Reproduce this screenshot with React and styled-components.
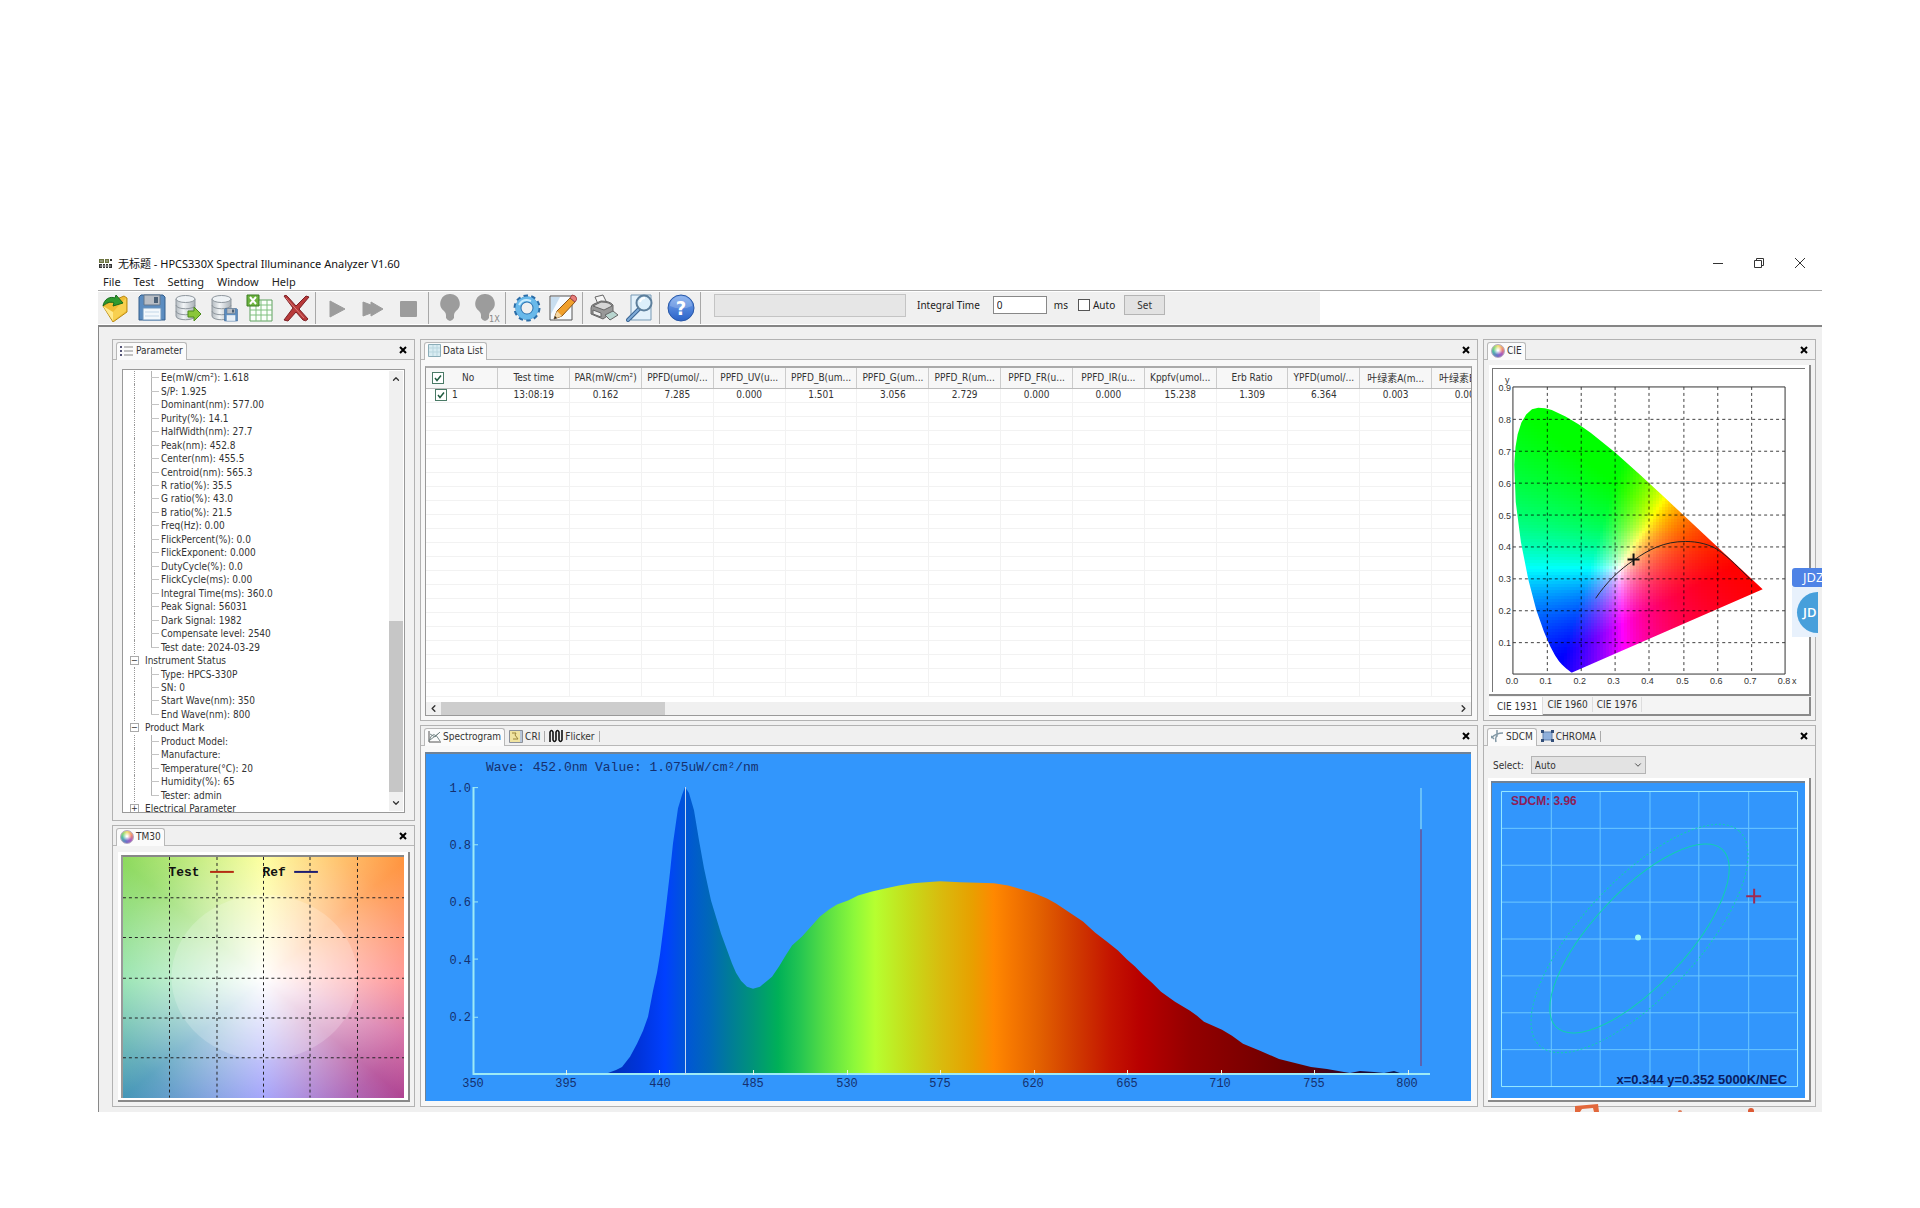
import React from "react";
import styled, { createGlobalStyle, css } from "styled-components";
import { ChevronDown, ChevronUp, ChevronLeft, ChevronRight } from "lucide-react";

const uiFont = `"DejaVu Sans Condensed", "Noto Sans CJK SC", sans-serif`;
const titleFont = `"Noto Sans", "Noto Sans CJK SC", sans-serif`;

const GlobalStyle = createGlobalStyle`
  * {
    box-sizing: border-box;
  }

  body {
    margin: 0;
    background: #fff;
    color: #333;
    font-family: ${uiFont};
    font-size: 10px;
  }

  button,
  input,
  select {
    font: inherit;
    color: inherit;
  }
`;

const Page = styled.div`
  display: flex;
  min-height: 100vh;
  padding: 253px 98px 96px;
`;

const Window = styled.div`
  position: relative;
  display: flex;
  flex: 1;
  flex-direction: column;
  min-width: 0;
  overflow: hidden;
`;

const TitleBar = styled.header`
  display: flex;
  align-items: center;
  height: 20px;
  gap: 6px;
  padding: 0 16px 0 1px;
  font-family: ${titleFont};
  font-size: 11px;
  color: #111;
`;

const Title = styled.h1`
  flex: 1;
  margin: 0;
  font-size: 11px;
  font-weight: 400;
`;

const WindowButtons = styled.div`
  display: flex;
  gap: 29px;
`;

const PlainButton = styled.button`
  display: flex;
  align-items: center;
  justify-content: center;
  padding: 0;
  border: 0;
  background: none;
`;

const MenuBar = styled.nav`
  display: flex;
  align-items: center;
  height: 16px;
  gap: 13px;
  margin-bottom: 1px;
  padding-left: 5px;
  font-family: ${titleFont};
  font-size: 11px;
  color: #222;
`;

const MenuItem = styled(PlainButton)``;

const ToolStrip = styled.div`
  display: flex;
  height: 37px;
  padding: 1px 0;
  border-top: 1px solid #aaa;
  border-bottom: 2px solid #858585;
`;

const Tools = styled.div`
  display: flex;
  align-items: center;
  width: 1222px;
  background: #f0f0f0;
`;

const ToolButton = styled(PlainButton)`
  width: 36px;
  height: 32px;
`;

const Divider = styled.span`
  width: 1px;
  height: 32px;
  margin: 0 3px 0 1px;
  background: #a8a8a8;
`;

const Progress = styled.div`
  width: 192px;
  height: 23px;
  margin: 0 11px 6px 10px;
  border: 1px solid #c4c4c4;
  background: #e6e6e6;
`;

const Field = styled.label`
  display: flex;
  align-items: center;
  margin-bottom: 6px;
  font-family: ${titleFont};
  font-size: 10px;
  color: #222;
`;

const TimeInput = styled.input`
  width: 54px;
  height: 18px;
  margin: 0 7px 0 13px;
  padding: 0 3px;
  border: 1px solid #888;
  background: #fff;
`;

const checkMark = `url("data:image/svg+xml,%3Csvg xmlns='http://www.w3.org/2000/svg' viewBox='0 0 10 10'%3E%3Cpath d='M2 5l2 2.500L8 2.500' fill='none' stroke='%23205c40' stroke-width='1.500'/%3E%3C/svg%3E")`;

const Tick = styled.input`
  appearance: none;
  width: 12px;
  height: 12px;
  margin: 0 3px 0 0;
  border: 1px solid #555;
  background: #fff;

  &:checked {
    border-color: #4a7a66;
    background-image: ${checkMark};
  }
`;

const AutoField = styled(Field)`
  margin-left: 10px;
`;

const SetButton = styled.button`
  width: 41px;
  height: 20px;
  margin: 0 0 6px 9px;
  padding: 0;
  border: 1px solid #b4b4b4;
  background: #e2e2e2;
  font-family: ${titleFont};
`;

const Workspace = styled.main`
  display: grid;
  grid-template-columns: 303fr 1058fr 333fr;
  flex: 1;
  column-gap: 5px;
  padding: 12px 6px 5px 13px;
  border-left: 1px solid #888;
  background: #f0f0f0;
`;

const Column = styled.div`
  display: flex;
  flex-direction: column;
  gap: 4px;
  min-width: 0;
`;

const PanelFrame = styled.section`
  display: flex;
  flex: ${({ $grow }) => $grow} 1 0;
  flex-direction: column;
  min-height: 0;
  border: 1px solid #b2b2b2;
  background: ${({ $light }) => ($light ? "#f8f8f8" : "#f2f2f2")};
`;

const PanelHeader = styled.div`
  display: flex;
  align-items: flex-end;
  height: 20px;
  padding: 0 7px 0 3px;
  border-bottom: 1px solid #b8b8b8;
  background: #f0f0f0;
`;

const Tab = styled(PlainButton)`
  height: 17px;
  gap: 2px;
  padding: 0 0 1px 4px;
  ${({ $active }) =>
    $active
      ? css`
          height: 18px;
          margin-bottom: -1px;
          padding: 0 3px 2px 3px;
          border: 1px solid #b8b8b8;
          border-bottom: 0;
          border-radius: 3px 3px 0 0;
          background: #fbfbfb;
        `
      : css`
          &::after {
            content: "";
            width: 1px;
            height: 11px;
            margin-left: 2px;
            background: #aaa;
          }
        `}
`;

const CloseButton = styled(PlainButton)`
  margin: 0 0 5px auto;
`;

const PanelBody = styled.div`
  display: flex;
  flex: 1;
  flex-direction: column;
  min-height: 0;
  padding: ${({ $pad }) => $pad};
`;

const TreeBox = styled.div`
  display: flex;
  flex: 1;
  min-height: 0;
  border: 1px solid #999;
  background: #fff;
  overflow: hidden;
`;

const Tree = styled.ul`
  display: grid;
  grid-auto-rows: 1fr;
  flex: 1;
  margin: 1px 0 -3px;
  padding: 0 0 0 11px;
  list-style: none;
`;

const TreeRow = styled.li`
  display: flex;
  align-items: center;
  min-height: 0;
  line-height: 13px;
  white-space: nowrap;
`;

const Trunk = styled.span`
  align-self: stretch;
  width: 17px;
  border-left: 1px dotted #999;
`;

const Branch = styled.span`
  align-self: stretch;
  width: 8px;
  margin-right: 2px;
  background: linear-gradient(#c4c4c4, #c4c4c4) 0 50% / 8px 1px no-repeat,
    linear-gradient(#b4b4b4, #b4b4b4) 0 0 / 1px ${({ $last }) => ($last ? "50%" : "100%")} no-repeat;
`;

const Expander = styled(PlainButton)`
  width: 9px;
  height: 9px;
  margin: 0 6px 0 -4px;
  border: 1px solid #aaa;
  background: #fff;
  font-size: 9px;
  line-height: 7px;
`;

const VerticalScroll = styled.div`
  display: flex;
  flex-direction: column;
  align-items: center;
  width: 14px;
  margin: 1px 1px 1px 0;
  padding: 3px 0;
  background: #f0f0f0;
`;

const VerticalTrack = styled.div`
  display: flex;
  flex: 1;
  align-items: flex-end;
  width: 100%;
  padding-bottom: 6px;
`;

const VerticalThumb = styled.div`
  width: 100%;
  height: 42%;
  background: #c6c6c6;
`;

const HorizontalScroll = styled.div`
  display: flex;
  align-items: center;
  height: 13px;
  padding: 0 2px;
  background: #f0f0f0;
`;

const HorizontalTrack = styled.div`
  flex: 1;
  height: 100%;
  padding-left: 2px;
`;

const HorizontalThumb = styled.div`
  width: 22%;
  height: 100%;
  background: #cdcdcd;
`;

const SheetBox = styled.div`
  display: flex;
  flex: 1;
  flex-direction: column;
  min-height: 0;
  border: 1px solid #999;
  border-top: 2px solid #aaa;
  background: #fff;
  overflow: hidden;
`;

const SheetScroll = styled.div`
  flex: 1;
  min-height: 0;
  overflow: hidden;
`;

const Sheet = styled.table`
  width: 1078px;
  table-layout: fixed;
  border-collapse: collapse;
`;

const HeadCell = styled.th`
  height: 20px;
  padding: 0;
  border-right: 1px solid #ccc;
  border-bottom: 1px solid #bbb;
  background: #f7f7f7;
  font-weight: 400;
  white-space: nowrap;
  overflow: hidden;
`;

const Cell = styled.td`
  height: 14px;
  padding: 0;
  border-right: 1px solid #f2f2f2;
  border-bottom: 1px solid #f2f2f2;
  line-height: 12px;
  text-align: center;
`;

const CheckCell = styled.div`
  display: flex;
  align-items: center;
  gap: ${({ $gap }) => $gap}px;
  padding-left: ${({ $left }) => $left}px;
`;

const Sunken = styled.div`
  display: flex;
  flex: 1;
  min-height: 0;
  padding: 3px 4px 2px 3px;
  border-right: 2px solid #8a8a8a;
  border-bottom: 2px solid #8a8a8a;
  background: #fff;
`;

const TmPlot = styled.div`
  display: flex;
  flex: 1;
  border-top: 2px solid #888;
  border-left: 2px solid #999;
  background: radial-gradient(
      ellipse 68% 72% at 50% 51%,
      #fff,
      rgba(255, 255, 255, 0.5) 45%,
      rgba(255, 255, 255, 0.16) 80%,
      rgba(255, 255, 255, 0.04)
    ),
    conic-gradient(
      at 50% 51%,
      #fdff80,
      #ffc45c 27deg,
      #ff9038 50deg,
      #ff7c7c 90deg,
      #d05c98 112deg,
      #ac3c8e 130deg,
      #8484fa 180deg,
      #3e92b4 230deg,
      #80dea0 270deg,
      #88d858 310deg,
      #fdff80
    );
`;

const Plot = styled.svg`
  display: block;
  flex: 1;
  width: 100%;
  height: 100%;
  min-width: 0;
  min-height: 0;
`;

const BlueBox = styled.div`
  display: flex;
  flex: 1;
  min-height: 0;
  border-top: 2px solid #6f8296;
  border-left: 1px solid #6f8296;
  background: #3296fc;
`;

const CieBox = styled.div`
  display: flex;
  flex: 1;
  min-height: 0;
  border-top: 1px solid #777;
  border-left: 1px solid #777;
`;

const CieTabs = styled.div`
  display: flex;
  height: 19px;
  margin-top: 1px;
  border-right: 2px solid #8a8a8a;
  border-bottom: 2px solid #8a8a8a;
  background: #f4f4f4;
`;

const CieTab = styled(PlainButton)`
  height: ${({ $active }) => ($active ? 18 : 15)}px;
  padding: ${({ $active }) => ($active ? "0 5px 0 8px" : "0 4px")};
  border-right: 1px solid #ddd;
  background: ${({ $active }) => ($active ? "#fff" : "transparent")};
`;

const SelectRow = styled.div`
  display: flex;
  align-items: center;
  gap: 7px;
  height: 32px;
  padding: 6px 0 0 5px;
`;

const SelectWrap = styled.span`
  display: grid;
  align-items: center;

  > * {
    grid-area: 1 / 1;
  }

  > svg {
    justify-self: end;
    margin-right: 3px;
    pointer-events: none;
  }
`;

const Select = styled.select`
  appearance: none;
  width: 115px;
  height: 18px;
  padding: 0 3px;
  border: 1px solid #b4b4b4;
  border-radius: 0;
  background: #e3e3e3;
`;

// floating helper docked to the right edge of the desktop
const Dock = styled.aside`
  position: absolute;
  top: 315px;
  right: 0;
  width: 30px;
  overflow: hidden;
  font-family: "Open Sans", sans-serif;
  color: #fff;
`;

const DockLabel = styled.div`
  height: 19px;
  padding-left: 11px;
  border-radius: 3px 0 0 3px;
  background: #4f83e6;
  font-size: 13px;
  line-height: 19px;
`;

const DockBody = styled.div`
  height: 50px;
  margin-right: 4px;
  padding: 5px 0 0 5px;
  background: #e8f1fc;
  overflow: hidden;
`;

const DockCircle = styled.div`
  width: 41px;
  height: 41px;
  padding-left: 6px;
  border-radius: 50%;
  background: #479fdb;
  font-size: 13px;
  font-weight: 600;
  line-height: 41px;
`;

const Splash = styled.svg`
  position: absolute;
  right: 66px;
  bottom: 0;
`;

const disk = (
  <g>
    <path d="M1 3 3 1h22l2 2v23H1z" fill="#5b8cc0" stroke="#345f8c" />
    <path d="M6 1h16v10H6z" fill="#b9bec5" stroke="#66788c" />
    <path d="M16 3h4v6h-4z" fill="#4b6076" />
    <path d="M5 14h18v12H5z" fill="#f3f8fc" stroke="#6d95bd" />
    <path d="M7 18h14M7 22h14" stroke="#c3d7e8" />
  </g>
);

const database = (
  <g stroke="#8f979e" strokeWidth="1">
    <path d="M2 5v17c0 5 19 5 19 0V5z" fill="url(#metal)" />
    <path d="M2 11c0 5 19 5 19 0M2 17c0 5 19 5 19 0" fill="none" />
    <ellipse cx="11.500" cy="5" rx="9.500" ry="3.500" fill="#eef2f5" />
  </g>
);

const bulb = <path d="M10 0a9.500 9.500 0 0 0-6 17q2 2 2 4v3q4 6 8 0v-3q0-2 2-4A9.500 9.500 0 0 0 10 0z" fill="#9c9c9c" />;

const icons = {
  open: (
    <g>
      <path d="M1 12 8 8 22 2l3 2v14L11 28z" fill="#f0bd35" stroke="#b98b16" />
      <path d="M1 12l10 6v9z" fill="#ffe98c" />
      <path d="M11 18v9l13-10V4z" fill="#f8d050" />
      <path d="M1 12C2 5 8 2 13 4l1-3 7 8-10 3 1-3c-4-2-8 0-11 3z" fill="#2f9a2f" stroke="#176b1b" />
    </g>
  ),
  save: disk,
  exportDb: (
    <g>
      {database}
      <path d="M14 17h6v-4l7 7-7 7v-4h-6z" fill="#8ac63a" stroke="#4b8a1c" />
    </g>
  ),
  saveDb: (
    <g>
      {database}
      <g transform="translate(14 14) scale(.5)">{disk}</g>
    </g>
  ),
  excel: (
    <g>
      <path d="M4 6h22v21H4z" fill="#fbfffb" stroke="#5ea05e" />
      <path d="M4 11h22M4 16h22M4 21h22M10 6v21M15 6v21M21 6v21" stroke="#7fc07f" />
      <path d="M1 1h12v11H1z" fill="#6cb33f" stroke="#3d7f24" />
      <path d="m4 3 6 7m0-7-6 7" stroke="#fff" strokeWidth="2" />
    </g>
  ),
  remove: (
    <g>
      <path d="M2 2q2-2 4 1l8 9L24 2l3 1-10 12 9 10q-2 3-5 1l-7-8-8 9-4-1 9-12z" fill="#b83a3a" stroke="#7b1f24" />
      <path d="m4 4 18 20" stroke="#dc7b78" />
    </g>
  ),
  play: <path d="M7 7l15 8-15 8z" fill="#9c9c9c" stroke="#9c9c9c" strokeLinejoin="round" />,
  forward: <path d="M4 8l8 3V8l12 7-12 7v-3l-8 3z" fill="#9c9c9c" stroke="#9c9c9c" strokeLinejoin="round" />,
  stop: <rect x="5" y="7" width="17" height="16" rx="1" fill="#9c9c9c" />,
  bulb: <g transform="translate(4 0)">{bulb}</g>,
  bulbX: (
    <g>
      <g transform="translate(3 0)">{bulb}</g>
      <text x="17" y="28" fontSize="9" fill="#888">
        1X
      </text>
    </g>
  ),
  gear: (
    <g>
      <circle cx="14" cy="14" r="11.500" fill="none" stroke="#2b6da8" strokeWidth="4" strokeDasharray="4.200 3.025" />
      <circle cx="14" cy="14" r="8.500" fill="none" stroke="#2d73b0" strokeWidth="6" />
      <circle cx="14" cy="14" r="9" fill="none" stroke="#69b9ea" strokeWidth="5" />
      <path d="M6 11q4-7 12-4" fill="none" stroke="#c8ecff" strokeWidth="2" />
    </g>
  ),
  edit: (
    <g>
      <path d="M1 2h22v24H1z" fill="#f7fbff" stroke="#555" />
      <path d="M2 3h9L2 20z" fill="#c8def0" />
      <path d="M5 25l3-8L21 4l5 4-13 14z" fill="#f0a02c" stroke="#8c5516" />
      <path d="M21 4l2-3q4 0 5 4l-2 3z" fill="#e77d79" stroke="#a04545" />
      <path d="M5 25l3-8 5 5z" fill="#f4d7a5" />
      <path d="M5 25l1-3 2 2z" fill="#222" />
    </g>
  ),
  print: (
    <g stroke="#666">
      <path d="M8 10 5 3l8-2 4 8z" fill="#f7f7f7" />
      <path d="M1 14q0-3 3-4l7-3q9 0 12 4v7l-10 7-12-5z" fill="#989898" />
      <path d="M3 12l8-4q9 0 11 4l-8 4z" fill="#d6d6d6" />
      <path d="M3 16l8 3v4l-8-3z" fill="#eee" />
      <path d="M15 21l8-4 5 4-8 5z" fill="#b8d5cf" />
    </g>
  ),
  preview: (
    <g>
      <path d="M5 1h20v25H5z" fill="#e3f1fb" stroke="#7699b5" />
      <path d="M13 15 2 26" stroke="#3b6594" strokeWidth="4" strokeLinecap="round" />
      <path d="M13 15 2 26" stroke="#7facd8" strokeWidth="2" strokeLinecap="round" />
      <circle cx="18" cy="9" r="7.500" fill="#dceffb" stroke="#5d7f9c" strokeWidth="2" />
      <path d="M14 8q1-4 5-4" stroke="#fff" strokeWidth="2" fill="none" />
    </g>
  ),
  help: (
    <g>
      <circle cx="14" cy="14" r="13" fill="url(#helpBlue)" stroke="#2857a6" />
      <path d="M3 12a11 10 0 0 1 22 0q-11 5-22 0z" fill="#fff" opacity=".2" />
      <text x="14" y="21" fontSize="20" fontWeight="700" textAnchor="middle" fill="#fff">
        ?
      </text>
    </g>
  ),
};

const ToolIcon = ({ name }) => (
  <svg width="28" height="28" viewBox="0 0 28 28" aria-hidden="true">
    {icons[name]}
  </svg>
);

const tools = [
  ["open", "save", "exportDb", "saveDb", "excel", "remove"],
  ["play", "forward", "stop"],
  ["bulb", "bulbX"],
  ["gear", "edit"],
  ["print", "preview"],
  ["help"],
];

const Wheel = styled.span`
  width: 14px;
  height: 14px;
  border: 1px solid #b5a8c0;
  border-radius: 50%;
  background: radial-gradient(circle at 50% 45%, #fff 5%, transparent 50%),
    conic-gradient(#f0df70, #f08a70 70deg, #a85cc0 130deg, #6a70c8 190deg, #4fb8a8 260deg, #8bd878 310deg, #f0df70);
`;

const tabIcons = {
  wheel: <Wheel />,
  list: (
    <svg width="14" height="12" viewBox="0 0 14 12">
      <path d="M0 2h2M0 6h2M0 10h2" stroke="#557" strokeWidth="2" />
      <path d="M4 2h9M4 6h9M4 10h9" stroke="#888" />
    </svg>
  ),
  sheet: (
    <svg width="13" height="13" viewBox="0 0 13 13">
      <path d="M.5.5h12v12H.5z" fill="#d8ecf2" stroke="#8badb8" />
      <path d="M1 4h11M1 8h11M5 1v11M9 1v11" stroke="#b9d6df" />
    </svg>
  ),
  spectrum: (
    <svg width="13" height="12" viewBox="0 0 13 12" fill="none">
      <path d="M1 0v11h12" stroke="#555" />
      <path d="M1 10Q5-3 12 10M2 3l5 3 5-5M2 9l9-7" stroke="#788" />
    </svg>
  ),
  cri: (
    <svg width="14" height="13" viewBox="0 0 14 13">
      <path d="M.5.5h13v12H.5z" fill="#f0e3a0" stroke="#8a8f98" />
      <path d="M3 3h4l-1 2 3 4H4" stroke="#9a8438" fill="none" />
      <path d="M11 1h2v11h-2z" fill="#b9c6d8" />
    </svg>
  ),
  flicker: (
    <svg width="14" height="14" viewBox="0 0 14 14">
      <path d="M1 13V3q1.500-3 3 0v8q1.500 3 3 0V3q1.500-3 3 0v8q1.500 3 3 0V1" stroke="#111" strokeWidth="1.600" fill="none" />
    </svg>
  ),
  sdcm: (
    <svg width="13" height="13" viewBox="0 0 13 13" fill="none" stroke="#8298a5">
      <path d="M0 8q5-5 12-5M6 0v6q-2 1-1 6M0 6l3 3" strokeWidth="1.500" />
    </svg>
  ),
  chroma: (
    <svg width="13" height="12" viewBox="0 0 13 12">
      <path d="M2 2h9v8H2z" fill="#8fb0dc" stroke="#6483ae" />
      <path d="M0 0h3v3H0zM10 0h3v3h-3zM0 9h3v3H0zM10 9h3v3h-3z" fill="#34507a" />
    </svg>
  ),
};

const Panel = ({ tabs, grow, light, pad, children }) => (
  <PanelFrame $grow={grow} $light={light}>
    <PanelHeader>
      {tabs.map(([icon, label], i) => (
        <Tab key={label} $active={i === 0}>
          {tabIcons[icon]}
          {label}
        </Tab>
      ))}
      <CloseButton aria-label="Close panel">
        <svg width="8" height="8" viewBox="0 0 8 8">
          <path d="m1 1 6 6m0-6-6 6" stroke="#000" strokeWidth="2" />
        </svg>
      </CloseButton>
    </PanelHeader>
    <PanelBody $pad={pad}>{children}</PanelBody>
  </PanelFrame>
);

const treeGroups = [
  {
    items: [
      "Ee(mW/cm²): 1.618",
      "S/P: 1.925",
      "Dominant(nm): 577.00",
      "Purity(%): 14.1",
      "HalfWidth(nm): 27.7",
      "Peak(nm): 452.8",
      "Center(nm): 455.5",
      "Centroid(nm): 565.3",
      "R ratio(%): 35.5",
      "G ratio(%): 43.0",
      "B ratio(%): 21.5",
      "Freq(Hz): 0.00",
      "FlickPercent(%): 0.0",
      "FlickExponent: 0.000",
      "DutyCycle(%): 0.0",
      "FlickCycle(ms): 0.00",
      "Integral Time(ms): 360.0",
      "Peak Signal: 56031",
      "Dark Signal: 1982",
      "Compensate level: 2540",
      "Test date: 2024-03-29",
    ],
  },
  {
    title: "Instrument Status",
    items: ["Type: HPCS-330P", "SN: 0", "Start Wave(nm): 350", "End Wave(nm): 800"],
  },
  {
    title: "Product Mark",
    items: ["Product Model:", "Manufacture:", "Temperature(°C): 20", "Humidity(%): 65", "Tester: admin"],
  },
  { title: "Electrical Parameter", closed: true, items: [] },
];

const ParameterTree = () => (
  <TreeBox>
    <Tree>
      {treeGroups.map((group, g) => (
        <React.Fragment key={g}>
          {group.title && (
            <TreeRow>
              <Expander aria-label={group.title}>{group.closed ? "+" : "−"}</Expander>
              {group.title}
            </TreeRow>
          )}
          {group.items.map((item, i) => (
            <TreeRow key={item}>
              <Trunk />
              <Branch $last={i === group.items.length - 1} />
              {item}
            </TreeRow>
          ))}
        </React.Fragment>
      ))}
    </Tree>
    <VerticalScroll>
      <ChevronUp size={10} strokeWidth={3} />
      <VerticalTrack>
        <VerticalThumb />
      </VerticalTrack>
      <ChevronDown size={10} strokeWidth={3} />
    </VerticalScroll>
  </TreeBox>
);

const columns = [
  ["Test time", "13:08:19"],
  ["PAR(mW/cm²)", "0.162"],
  ["PPFD(umol/...", "7.285"],
  ["PPFD_UV(u...", "0.000"],
  ["PPFD_B(um...", "1.501"],
  ["PPFD_G(um...", "3.056"],
  ["PPFD_R(um...", "2.729"],
  ["PPFD_FR(u...", "0.000"],
  ["PPFD_IR(u...", "0.000"],
  ["Kppfv(umol...", "15.238"],
  ["Erb Ratio", "1.309"],
  ["YPFD(umol/...", "6.364"],
  ["叶绿素A(m...", "0.003"],
  ["叶绿素B(m...", "0.001"],
];

const emptyRows = Array.from({ length: 21 }, (_, i) => i);

const DataSheet = () => (
  <SheetBox>
    <SheetScroll>
      <Sheet>
        <thead>
          <tr>
            <HeadCell scope="col">
              <CheckCell $left={6} $gap={15}>
                <Tick type="checkbox" aria-label="Select all" defaultChecked />
                No
              </CheckCell>
            </HeadCell>
            {columns.map(([label]) => (
              <HeadCell key={label} scope="col">
                {label}
              </HeadCell>
            ))}
          </tr>
        </thead>
        <tbody>
          <tr>
            <Cell>
              <CheckCell $left={9} $gap={2}>
                <Tick type="checkbox" aria-label="Select row 1" defaultChecked />1
              </CheckCell>
            </Cell>
            {columns.map(([label, value]) => (
              <Cell key={label}>{value}</Cell>
            ))}
          </tr>
          {emptyRows.map((row) => (
            <tr key={row}>
              <Cell />
              {columns.map(([label]) => (
                <Cell key={label} />
              ))}
            </tr>
          ))}
        </tbody>
      </Sheet>
    </SheetScroll>
    <HorizontalScroll>
      <ChevronLeft size={11} strokeWidth={3} />
      <HorizontalTrack>
        <HorizontalThumb />
      </HorizontalTrack>
      <ChevronRight size={11} strokeWidth={3} />
    </HorizontalScroll>
  </SheetBox>
);

const Tm30 = () => (
  <TmPlot>
    <Plot viewBox="0 0 284 242" preserveAspectRatio="none">
      <ellipse cx="143" cy="121" rx="94" ry="83" fill="#fff" opacity=".2" />
      <g stroke="#222" strokeDasharray="3 3">
        {[47, 95, 142, 189, 237].map((x) => (
          <path key={x} d={`M${x} 0v242`} />
        ))}
        {[41, 81, 122, 162, 202].map((y) => (
          <path key={y} d={`M0 ${y}h284`} />
        ))}
      </g>
      <g fontFamily="Liberation Mono, monospace" fontSize="13" fontWeight="700" fill="#111">
        <text x="46" y="19">
          Test
        </text>
        <text x="141" y="19">
          Ref
        </text>
      </g>
      <path d="M88 15h24" stroke="#b42c12" strokeWidth="2" />
      <path d="M173 15h24" stroke="#1c1c70" strokeWidth="2" />
    </Plot>
  </TmPlot>
);

const spectrumStops = [
  [611, "#0030b8"],
  [640, "#0034dc"],
  [665, "#0040ff"],
  [686, "#0056d6"],
  [710, "#0068b8"],
  [730, "#007c98"],
  [754, "#009478"],
  [778, "#00b058"],
  [799, "#22c452"],
  [823, "#52dc46"],
  [854, "#8cf83a"],
  [875, "#b6ff30"],
  [909, "#c6dc1a"],
  [940, "#d8bc0e"],
  [972, "#e8a000"],
  [994, "#ff8800"],
  [1011, "#f67800"],
  [1040, "#e26000"],
  [1076, "#d03a00"],
  [1111, "#c41400"],
  [1140, "#b80000"],
  [1190, "#940000"],
  [1297, "#680000"],
  [1368, "#180838"],
  [1408, "#082060"],
];

const spectrumCurve =
  "608,1072 616,1069 622,1066 630,1056 637,1043 643,1030 648,1016 653,990 657,972 660,954 665,915 670,872 673,843 678,808 682,795 685,787 689,793 694,810 699,840 704,868 711,900 721,933 732,963 736,972 741,980 747,986 753,988 760,986 766,981 772,976 779,966 785,956 792,945 802,936 811,926 820,916 829,909 837,904 848,900 858,895 872,891 885,888 899,885 913,883 926,882 940,881 960,882 994,883 1008,885 1022,889 1035,893 1047,898 1056,903 1065,909 1074,915 1083,921 1095,932 1108,942 1118,950 1127,959 1135,966 1143,974 1152,982 1161,991 1175,1001 1190,1010 1197,1015 1204,1021 1213,1025 1222,1029 1232,1035 1243,1043 1260,1050 1279,1058 1295,1062 1311,1066 1327,1068 1344,1071 1350,1072 1360,1070 1374,1071 1384,1072 1394,1070 1400,1072";

const Spectrogram = () => (
  <BlueBox>
    <Plot viewBox="426 754 1045 346" preserveAspectRatio="none">
      <defs>
        <linearGradient id="spectrum" gradientUnits="userSpaceOnUse" x1="611" y1="0" x2="1408" y2="0">
          {spectrumStops.map(([x, color]) => (
            <stop key={x} offset={(x - 611) / 797} stopColor={color} />
          ))}
        </linearGradient>
      </defs>
      <polygon points={spectrumCurve} fill="url(#spectrum)" />
      <g stroke="#9eeaf5" fill="none">
        <path d="M473.500 787V1073H1430" strokeWidth="2" />
        {[787, 844, 901, 958, 1016].map((y) => (
          <path key={y} d={`M473 ${y + 0.5}h5`} />
        ))}
        {[566, 659, 753, 847, 940, 1034, 1127, 1221, 1314, 1408].map((x) => (
          <path key={x} d={`M${x + 0.5} 1069v5`} stroke="#e8f4e0" />
        ))}
        <path d="M685.500 787v287" stroke="#c5d8f0" />
        <path d="M1421 788v41" />
        <path d="M1421 829v236" stroke="#843064" />
      </g>
      <g fontFamily="Liberation Mono, monospace" fontSize="12" fill="#15306e">
        <text x="486" y="771" fontSize="13">
          Wave: 452.0nm Value: 1.075uW/cm²/nm
        </text>
        {["1.0", "0.8", "0.6", "0.4", "0.2"].map((label, i) => (
          <text key={label} x="471" y={792 + i * 57} textAnchor="end">
            {label}
          </text>
        ))}
        {[350, 395, 440, 485, 530, 575, 620, 665, 710, 755, 800].map((nm, i) => (
          <text key={nm} x={473 + Math.round(i * 93.4)} y="1086" textAnchor="middle">
            {nm}
          </text>
        ))}
      </g>
    </Plot>
  </BlueBox>
);

const locus = [
  [0.1741, 0.005], [0.1714, 0.0051], [0.1644, 0.0109], [0.1566, 0.0177], [0.144, 0.0297],
  [0.1355, 0.0399], [0.1241, 0.0578], [0.1096, 0.0868], [0.0913, 0.1327], [0.0687, 0.2007],
  [0.0454, 0.295], [0.0235, 0.4127], [0.0082, 0.5384], [0.0039, 0.6548], [0.0075, 0.71],
  [0.0139, 0.7502], [0.025, 0.787], [0.0389, 0.812], [0.056, 0.829], [0.0743, 0.8338],
  [0.094, 0.832], [0.1142, 0.8262], [0.1547, 0.8059], [0.1929, 0.7816], [0.2296, 0.7543],
  [0.3016, 0.6923], [0.3731, 0.6245], [0.4441, 0.5547], [0.5125, 0.4866], [0.5752, 0.4242],
  [0.627, 0.3725], [0.6915, 0.3083], [0.7347, 0.2653],
];

const cieX = (x) => 20 + x * 341;
const cieY = (y) => 306 - y * 320.5;

// linear sRGB of a chromaticity, scaled so the strongest channel is full
const xyColor = (x, y) => {
  const X = x / y;
  const Z = (1 - x - y) / y;
  const rgb = [
    3.2406 * X - 1.5372 - 0.4986 * Z,
    -0.9689 * X + 1.8758 + 0.0415 * Z,
    0.0557 * X - 0.204 + 1.057 * Z,
  ].map((v) => Math.max(0, v));
  const top = Math.max(...rgb);
  return `rgb(${rgb.map((v) => Math.round((v / top) * 255)).join(",")})`;
};

const cieCells = [];
for (let px = 0; px < 252; px += 3) {
  for (let py = 0; py < 270; py += 3) {
    const x = (px + 1.5) / 341;
    const y = (py + 1.5) / 320.5;
    if (x + y < 1.03 && y > x * 0.46 - 0.1) {
      cieCells.push({ px: px + 20, py: 303 - py, fill: xyColor(x, y) });
    }
  }
}

const Cie = () => (
  <CieBox>
    <Plot viewBox="0 0 313 324" preserveAspectRatio="none">
      <defs>
        <clipPath id="locus">
          <polygon points={locus.map(([x, y]) => `${cieX(x)},${cieY(y)}`).join(" ")} />
        </clipPath>
      </defs>
      <g clipPath="url(#locus)" shapeRendering="crispEdges">
        {cieCells.map(({ px, py, fill }) => (
          <rect key={`${px}-${py}`} x={px} y={py} width="3" height="3" fill={fill} />
        ))}
      </g>
      <g stroke="#000" strokeDasharray="3 3" opacity=".75">
        {[1, 2, 3, 4, 5, 6, 7].map((i) => (
          <path key={i} d={`M${Math.round(cieX(i / 10)) + 0.5} 18v288`} />
        ))}
        {[1, 2, 3, 4, 5, 6, 7, 8].map((i) => (
          <path key={i} d={`M20 ${Math.round(cieY(i / 10)) + 0.5}h273`} />
        ))}
      </g>
      <path d="M20 18h273v288H20z" fill="none" stroke="#333" />
      <path
        d="M103 230C113 215 127 201 141 192C156 181 172 173 193 173C206 173 217 176 225 181C237 189 248 201 259 212"
        fill="none"
        stroke="#222"
      />
      <path d="M141 185v12M135 191h12" stroke="#111" strokeWidth="2" />
      <g fontFamily="Liberation Sans, sans-serif" fontSize="9" fill="#333">
        <text x="12" y="14">
          y
        </text>
        {[1, 2, 3, 4, 5, 6, 7, 8, 9].map((i) => (
          <text key={i} x="18" y={Math.round(cieY(i / 10)) + 4} textAnchor="end">
            {(i / 10).toFixed(1)}
          </text>
        ))}
        {[0, 1, 2, 3, 4, 5, 6, 7, 8].map((i) => (
          <text key={i} x={Math.round(cieX(i / 10)) - 1} y="316" textAnchor="middle">
            {(i / 10).toFixed(1)}
          </text>
        ))}
        <text x="300" y="316">
          x
        </text>
      </g>
    </Plot>
  </CieBox>
);

const Sdcm = () => (
  <BlueBox>
    <Plot viewBox="0 0 314 316" preserveAspectRatio="none">
      <g stroke="#6cc8ff">
        {[59, 108, 158, 207, 257].map((x) => (
          <path key={x} d={`M${x + 0.5} 9v296`} />
        ))}
        {[46, 83, 120, 157, 194, 231, 268].map((y) => (
          <path key={y} d={`M10 ${y - 0.5}h296`} />
        ))}
      </g>
      <path d="M9.500 8.500h297v296h-297z" fill="none" stroke="#98eaff" />
      <g fill="none" stroke="#10d0b0" transform="translate(148 156) rotate(-47)">
        <ellipse rx="122" ry="47" />
        <ellipse rx="147" ry="58" strokeDasharray="2 2" />
      </g>
      <circle cx="146.500" cy="155" r="3" fill="#a8fff4" />
      <path d="M263 106v15M255 113.500h15" stroke="#a02850" strokeWidth="2" />
      <g fontFamily="Liberation Sans, sans-serif" fontWeight="700">
        <text x="19" y="22" fontSize="12" fill="#8c2058">
          SDCM: 3.96
        </text>
        <text x="296" y="302" fontSize="13" fill="#0a1c60" textAnchor="end">
          x=0.344 y=0.352 5000K/NEC
        </text>
      </g>
    </Plot>
  </BlueBox>
);

export default function App() {
  return (
    <Page>
      <GlobalStyle />
      <Window>
        <TitleBar>
          <svg width="13" height="11" viewBox="0 0 13 11" aria-hidden="true">
            <defs>
              <linearGradient id="metal">
                <stop offset="0" stopColor="#b4bbc1" />
                <stop offset=".4" stopColor="#f2f5f7" />
                <stop offset="1" stopColor="#a9b0b6" />
              </linearGradient>
              <linearGradient id="helpBlue" x2="0" y2="1">
                <stop offset="0" stopColor="#7aa8ee" />
                <stop offset="1" stopColor="#2a62c8" />
              </linearGradient>
            </defs>
            <path d="M0 1h5v4H0zM6 1h4v4H6z" fill="#6c7440" />
            <path d="M11 1h2v2h-2z" fill="#333" />
            <path d="M0 6h3v4H0zM4 6h2v4H4zM7 6h2v4H7zM10 6h3v4h-3z" fill="#333" />
            <path d="M1 3h3M7 3h2M1 8h11" stroke="#bbb" />
          </svg>
          <Title>无标题 - HPCS330X Spectral Illuminance Analyzer V1.60</Title>
          <WindowButtons>
            <PlainButton aria-label="Minimize">
              <svg width="12" height="12" viewBox="0 0 12 12">
                <path d="M1 6.500h10" stroke="#333" />
              </svg>
            </PlainButton>
            <PlainButton aria-label="Restore">
              <svg width="12" height="12" viewBox="0 0 12 12" fill="none" stroke="#333">
                <path d="M1.500 3.500h7v7h-7zM3.500 3V1.500h7v7H9" />
              </svg>
            </PlainButton>
            <PlainButton aria-label="Close">
              <svg width="12" height="12" viewBox="0 0 12 12">
                <path d="m1 1 10 10m0-10L1 11" stroke="#333" />
              </svg>
            </PlainButton>
          </WindowButtons>
        </TitleBar>
        <MenuBar>
          {["File", "Test", "Setting", "Window", "Help"].map((item) => (
            <MenuItem key={item}>{item}</MenuItem>
          ))}
        </MenuBar>
        <ToolStrip>
          <Tools>
            {tools.map((group) => (
              <React.Fragment key={group[0]}>
                {group.map((name) => (
                  <ToolButton key={name} aria-label={name}>
                    <ToolIcon name={name} />
                  </ToolButton>
                ))}
                <Divider />
              </React.Fragment>
            ))}
            <Progress />
            <Field>
              Integral Time
              <TimeInput defaultValue="0" />
              ms
            </Field>
            <AutoField>
              <Tick type="checkbox" />
              Auto
            </AutoField>
            <SetButton>Set</SetButton>
          </Tools>
        </ToolStrip>
        <Workspace>
          <Column>
            <Panel tabs={[["list", "Parameter"]]} grow={483} pad="9px 9px 7px 9px">
              <ParameterTree />
            </Panel>
            <Panel tabs={[["wheel", "TM30"]]} grow={281} pad="6px 4px 4px 5px">
              <Sunken>
                <Tm30 />
              </Sunken>
            </Panel>
          </Column>
          <Column>
            <Panel tabs={[["sheet", "Data List"]]} grow={382} pad="6px 5px 4px 4px" light>
              <DataSheet />
            </Panel>
            <Panel
              tabs={[
                ["spectrum", "Spectrogram"],
                ["cri", "CRI"],
                ["flicker", "Flicker"],
              ]}
              grow={382}
              pad="6px 6px 5px 4px"
              light
            >
              <Spectrogram />
            </Panel>
          </Column>
          <Column>
            <Panel tabs={[["wheel", "CIE"]]} grow={382} pad="5px 4px 4px 5px">
              <Sunken>
                <Cie />
              </Sunken>
              <CieTabs>
                <CieTab $active>CIE 1931</CieTab>
                <CieTab>CIE 1960</CieTab>
                <CieTab>CIE 1976</CieTab>
              </CieTabs>
            </Panel>
            <Panel
              tabs={[
                ["sdcm", "SDCM"],
                ["chroma", "CHROMA"],
              ]}
              grow={382}
              pad="0 4px 4px 4px"
            >
              <SelectRow>
                <label htmlFor="sdcm-mode">Select:</label>
                <SelectWrap>
                  <Select id="sdcm-mode" defaultValue="Auto">
                    <option>Auto</option>
                  </Select>
                  <ChevronDown size={10} />
                </SelectWrap>
              </SelectRow>
              <Sunken>
                <Sdcm />
              </Sunken>
            </Panel>
          </Column>
        </Workspace>
        <Dock>
          <DockLabel>JDZ</DockLabel>
          <DockBody>
            <DockCircle>JD</DockCircle>
          </DockBody>
        </Dock>
        <Splash width="182" height="9" viewBox="0 0 182 9" aria-hidden="true">
          <path d="M1 9V3L24 1l1 8h-5l-1-4L8 6 6 9z" fill="#e2683c" />
          <circle cx="106" cy="9" r="2" fill="#e08060" />
          <circle cx="177" cy="8" r="3" fill="#dd5a34" />
        </Splash>
      </Window>
    </Page>
  );
}
